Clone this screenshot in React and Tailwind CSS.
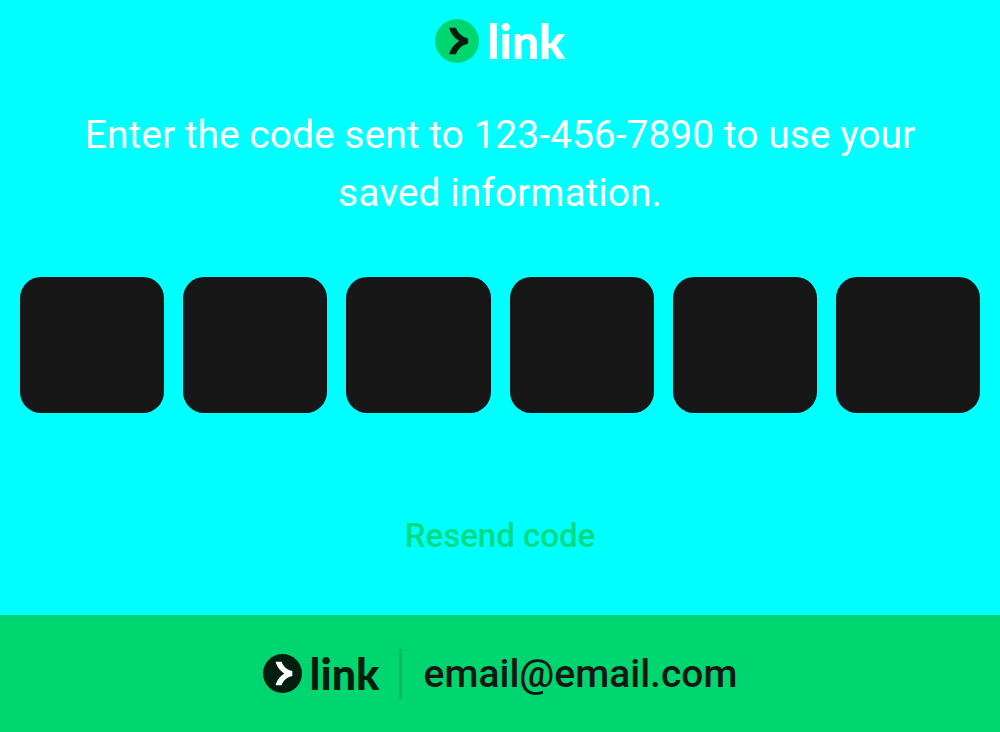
import { useRef, useState } from "react";

function LinkLogo({ circle, arrow, className, iconClass, wordClass }) {
  return (
    <span role="img" aria-label="link" className={`flex items-center ${className}`}>
      <svg viewBox="0 0 24 24" className={iconClass} aria-hidden="true">
        <circle cx="12" cy="12" r="12" fill={circle} />
        <path
          fill={arrow}
          d="M11.45 4.8H7.75c.72 3.01 2.82 5.58 5.45 7.2-2.63 1.62-4.73 4.19-5.45 7.2h3.7c.92-2.79 3.46-5.21 6.59-5.71v-2.99c-3.13-.49-5.67-2.91-6.59-5.7Z"
        />
      </svg>
      <span className={`font-['Lato',sans-serif] font-black ${wordClass}`}>link</span>
    </span>
  );
}

const CODE_LENGTH = 6;

export default function App() {
  const [code, setCode] = useState(Array(CODE_LENGTH).fill(""));
  const fields = useRef([]);

  const onChange = (index, value) => {
    const digit = value.replace(/\D/g, "").slice(-1);
    setCode((prev) => prev.map((d, i) => (i === index ? digit : d)));
    if (digit && index < CODE_LENGTH - 1) fields.current[index + 1].focus();
  };

  return (
    <div className="flex min-h-screen flex-col bg-[#00ffff] font-['Roboto',sans-serif]">
      <main className="flex grow flex-col items-center px-5 pt-[18px]">
        <LinkLogo
          circle="#00d66f"
          arrow="#011e0f"
          className="h-[46px] gap-2"
          iconClass="size-11"
          wordClass="text-[48px] leading-[46px] text-white"
        />
        <p className="mt-[42px] max-w-[880px] text-center text-[39px] leading-[58px] text-white">
          Enter the code sent to 123-456-7890 to use your saved information.
        </p>
        <div className="mt-[55px] grid w-full grid-cols-6 gap-[19px]">
          {code.map((digit, i) => (
            <input
              key={i}
              ref={(el) => {
                fields.current[i] = el;
              }}
              aria-label={`Digit ${i + 1}`}
              inputMode="numeric"
              value={digit}
              onChange={(e) => onChange(i, e.target.value)}
              className="h-[136px] w-full min-w-0 rounded-[21px] bg-[#171717] text-center text-5xl text-white outline-none focus:ring-4 focus:ring-[#00d66f]"
            />
          ))}
        </div>
        <button type="button" className="mt-[99px] mb-[55px] text-[33px] leading-[48px] font-medium text-[#03da84]">
          Resend code
        </button>
      </main>
      <footer className="flex h-[117px] items-center justify-center bg-[#00d66f]">
        <LinkLogo
          circle="#011e0f"
          arrow="#ffffff"
          className="h-10 gap-2"
          iconClass="size-[39px]"
          wordClass="text-[43px] leading-10 text-[#011e0f]"
        />
        <span className="ml-[19px] h-[50px] w-[3px] bg-[#02b860]" />
        <span className="ml-[22px] text-[39px] leading-[50px] font-medium text-[#171717]">email@email.com</span>
      </footer>
    </div>
  );
}
